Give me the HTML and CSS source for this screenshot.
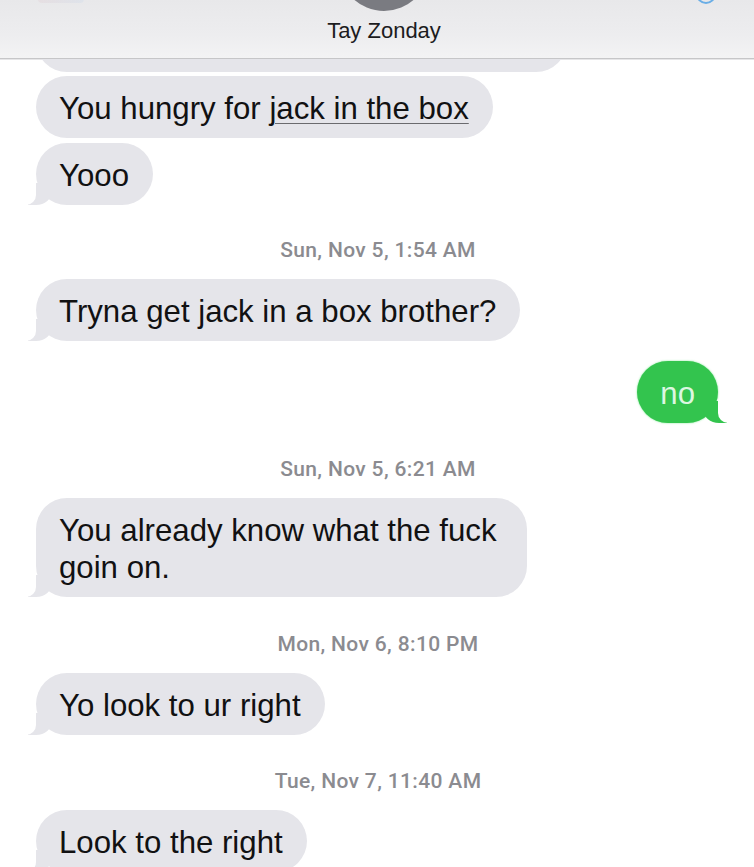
FILE: index.html
```html
<!DOCTYPE html>
<html lang="en">
<head>
<meta charset="utf-8">
<title>Tay Zonday</title>
<link rel="stylesheet" href="styles.css">
</head>
<body>
<div class="screen">
  <header class="nav">
    <div class="nav-left"><span class="ghost"></span></div>
    <div class="nav-center">
      <div class="avatar"></div>
      <div class="name">Tay Zonday</div>
    </div>
    <div class="nav-right"><span class="info"></span></div>
  </header>
  <main class="thread">
    <div class="clip"><div class="bubble in cut"></div></div>
    <div class="bubble in first">You hungry for <span class="link">jack in the box</span></div>
    <div class="bubble in tail group">Yooo</div>
    <div class="stamp s1">Sun, Nov 5, 1:54 AM</div>
    <div class="bubble in tail after-stamp">Tryna get jack in a box brother?</div>
    <div class="bubble out tail">no</div>
    <div class="stamp s2">Sun, Nov 5, 6:21 AM</div>
    <div class="bubble in tail after-stamp wide">You already know what the fuck<br>goin on.</div>
    <div class="stamp s3">Mon, Nov 6, 8:10 PM</div>
    <div class="bubble in tail after-stamp">Yo look to ur right</div>
    <div class="stamp s4">Tue, Nov 7, 11:40 AM</div>
    <div class="bubble in tail after-stamp">Look to the right</div>
  </main>
</div>
</body>
</html>
```

FILE: styles.css
```css
html, body {
  margin: 0;
  padding: 0;
  background: #ffffff;
}

body {
  font-family: "Liberation Sans", Arial, sans-serif;
  overflow: hidden;
}

.screen {
  width: 754px;
  height: 867px;
  overflow: hidden;
  display: flex;
  flex-direction: column;
}

/* ---------- navigation bar ---------- */
.nav {
  height: 58px;
  flex: 0 0 58px;
  display: grid;
  grid-template-columns: 1fr auto 1fr;
  background: linear-gradient(180deg, #e8e8ea 0%, #ededef 60%, #f3f3f4 100%);
  border-bottom: 1px solid #c6c6c8;
  box-shadow: 0 1px 0 #e6e6e8;
  overflow: hidden;
}

.nav-left {
  display: flex;
  padding-left: 38px;
}

.ghost {
  width: 46px;
  height: 4px;
  margin-top: -1px;
  border-radius: 0 0 6px 6px;
  background: linear-gradient(90deg, rgba(225, 205, 210, 0.35), rgba(205, 218, 235, 0.35));
}

.nav-center {
  display: flex;
  flex-direction: column;
  align-items: center;
  padding-left: 14px;
}

.avatar {
  width: 90px;
  height: 90px;
  margin-top: -79px;
  border-radius: 50%;
  background: #7a7b81;
}

.name {
  margin-top: 7px;
  font-size: 22px;
  line-height: 26px;
  color: #1c1c1e;
}

.nav-right {
  display: flex;
  justify-content: flex-end;
  padding-right: 38px;
}

.info {
  width: 20px;
  height: 20px;
  margin-top: -16px;
  border-radius: 50%;
  border: 2px solid #6aaee6;
  box-sizing: border-box;
}

/* ---------- message thread ---------- */
.thread {
  display: flex;
  flex-direction: column;
  align-items: flex-start;
  padding: 0 36px;
}

.bubble {
  position: relative;
  box-sizing: border-box;
  padding: 14px 24px 11px 23px;
  border-radius: 31px;
  font-size: 31.2px;
  line-height: 37px;
  color: #111112;
  background: #e5e5ea;
}

.bubble.in {
  align-self: flex-start;
}

.bubble.out {
  align-self: flex-end;
  background: #33c44e;
  color: #dcf7e1;
  padding: 14px 23px 11px 23px;
  box-shadow: 0 0 2px rgba(60, 220, 90, 0.7);
}

.bubble.wide {
  padding-right: 31px;
}

.clip {
  height: 13px;
  overflow: hidden;
  align-self: flex-start;
}

.bubble.cut {
  width: 531px;
  height: 62px;
  margin-top: -49px;
}

.bubble.first { margin-top: 4px; }
.bubble.group { margin-top: 5px; }
.bubble.after-stamp { margin-top: 17px; }
.bubble.out { margin-top: 20px; }

.link {
  text-decoration: underline;
  text-decoration-color: #6a6a6e;
  text-decoration-thickness: 1px;
  text-underline-offset: 4px;
}

/* tails */
.bubble.tail::before,
.bubble.tail::after {
  content: "";
  position: absolute;
  bottom: 0;
  height: 22px;
}

.bubble.in.tail::before {
  left: -8px;
  width: 24px;
  background: #e5e5ea;
  border-bottom-right-radius: 16px 14px;
}

.bubble.in.tail::after {
  left: -12px;
  width: 12px;
  background: #ffffff;
  border-bottom-right-radius: 10px;
}

.bubble.out.tail::before {
  right: -9px;
  width: 24px;
  background: #33c44e;
  border-bottom-left-radius: 16px 14px;
}

.bubble.out.tail::after {
  right: -13px;
  width: 13px;
  background: #ffffff;
  border-bottom-left-radius: 10px;
}

/* timestamps */
.stamp {
  align-self: stretch;
  text-align: center;
  font-family: Roboto, "Liberation Sans", sans-serif;
  font-size: 21px;
  line-height: 24px;
  font-weight: 500;
  letter-spacing: 0.35px;
  color: #8b8b90;
  margin-top: 33px;
  padding-left: 2px;
}

.stamp.s2 { margin-top: 34px; }
.stamp.s3 { margin-top: 35px; }
.stamp.s4 { margin-top: 34px; }
```
